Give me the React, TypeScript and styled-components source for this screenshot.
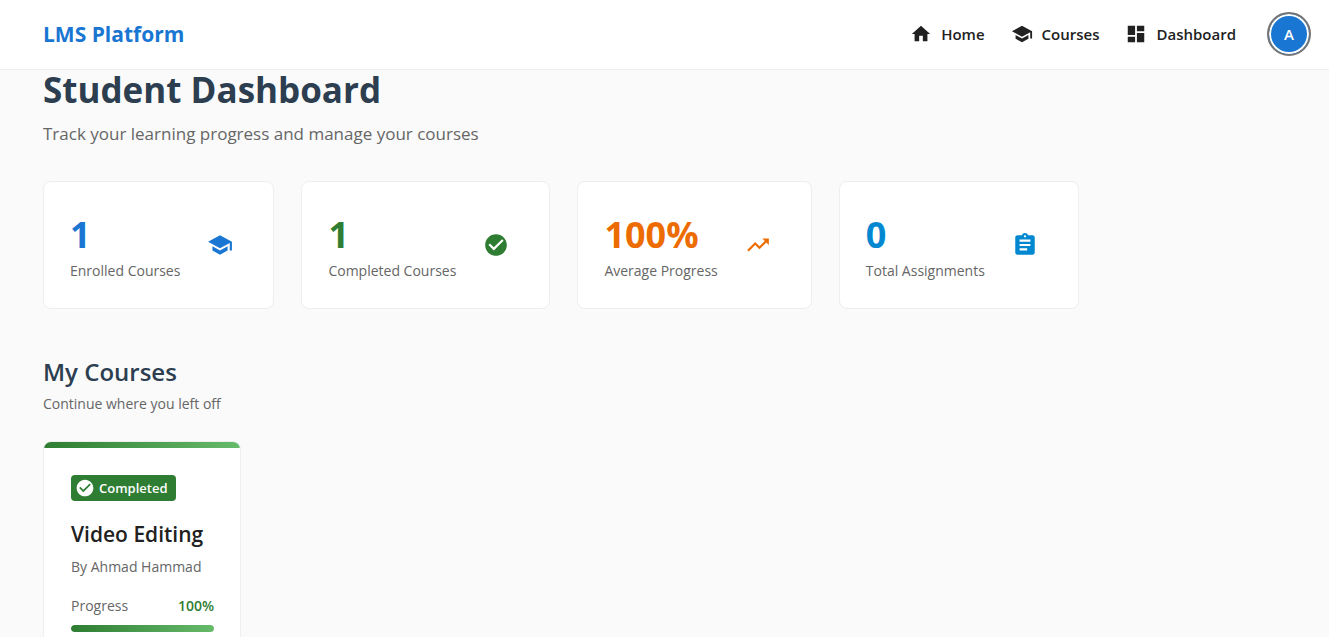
import React from "react";
import styled, { createGlobalStyle } from "styled-components";
import type { IconType } from "react-icons";
import {
  MdAssignment,
  MdCheckCircle,
  MdDashboard,
  MdHome,
  MdSchool,
  MdTrendingUp,
} from "react-icons/md";

const GlobalStyle = createGlobalStyle`
  *, *::before, *::after { box-sizing: border-box; }
  html { scrollbar-width: none; }
  body {
    margin: 0;
    background: #fafafa;
    color: #212121;
    font-family: "Segoe UI", "Open Sans", "Noto Sans", sans-serif;
  }
  h1, h2, h3, p { margin: 0; }
`;

const Header = styled.header`
  display: flex;
  align-items: center;
  justify-content: space-between;
  padding: 12px 18px 13px 43px;
  background: #fff;
  border-bottom: 1px solid #eee;
`;

const Brand = styled.a`
  color: #1976d2;
  font-size: 21px;
  line-height: 32px;
  font-weight: 700;
  text-decoration: none;
`;

const Nav = styled.nav`
  display: flex;
  align-items: center;
  gap: 26px;
`;

const NavLink = styled.a`
  display: flex;
  align-items: center;
  gap: 9px;
  color: #212121;
  font-size: 15px;
  line-height: 24px;
  font-weight: 600;
  text-decoration: none;

  svg { width: 22px; height: 22px; }
`;

const Avatar = styled.button`
  width: 44px;
  height: 44px;
  margin-left: 5px;
  padding: 0;
  border: 2px solid #757575;
  border-radius: 50%;
  background: #1976d2;
  box-shadow: inset 0 0 0 2px #fff;
  color: #fff;
  font: inherit;
  font-size: 15px;
  font-weight: 600;
`;

const Main = styled.main`
  padding: 0 43px 32px;
`;

const Title = styled.h1`
  color: #2c3e50;
  font-size: 35px;
  line-height: 40px;
  font-weight: 700;
`;

const Subtitle = styled.p`
  margin-top: 10px;
  color: #666;
  font-size: 17px;
  line-height: 28px;
  font-weight: 400;
`;

const Stats = styled.section`
  display: flex;
  flex-wrap: wrap;
  gap: 27px;
  margin-top: 33px;
`;

const StatCard = styled.article`
  display: flex;
  align-items: center;
  gap: 27px;
  padding: 29px 40px 25px 26px;
  border: 1px solid #eee;
  border-radius: 8px;
  background: #fff;
`;

const StatValue = styled.p<{ $color: string }>`
  color: ${({ $color }) => $color};
  font-size: 36px;
  line-height: 48px;
  font-weight: 700;
`;

const StatIcon = styled.span<{ $color: string }>`
  display: flex;
  margin-bottom: 4px;
  color: ${({ $color }) => $color};

  svg { width: 26px; height: 26px; }
`;

const Caption = styled.p`
  color: #666;
  font-size: 14px;
  line-height: 24px;
  font-weight: 400;
`;

const Section = styled.section`
  margin-top: 43px;
`;

const SectionTitle = styled.h2`
  color: #2c3e50;
  font-size: 24px;
  line-height: 40px;
  font-weight: 600;
`;

const CourseList = styled.div`
  display: flex;
  flex-wrap: wrap;
  gap: 27px;
  margin-top: 25px;
`;

const CourseCard = styled.article`
  min-width: 198px;
  overflow: hidden;
  border: 1px solid #eee;
  border-radius: 8px;
  background: #fff;
`;

const CardStripe = styled.div`
  height: 6px;
  background: linear-gradient(90deg, #2e7d32, #66bb6a);
`;

const CourseBody = styled.div`
  padding: 27px 26px 27px 27px;
`;

const Badge = styled.span`
  display: inline-flex;
  align-items: center;
  gap: 4px;
  height: 26px;
  padding: 0 8px 0 4px;
  border-radius: 4px;
  background: #2e7d32;
  color: #fff;
  font-size: 13px;
  line-height: 26px;
  font-weight: 600;
  vertical-align: top;

  svg { width: 20px; height: 20px; }
`;

const CourseTitle = styled.h3`
  margin-top: 17px;
  font-size: 21px;
  line-height: 32px;
  font-weight: 600;
`;

const Author = styled(Caption)`
  margin-top: 5px;
`;

const ProgressRow = styled.div`
  display: flex;
  justify-content: space-between;
  margin-top: 15px;
`;

const ProgressValue = styled.span`
  color: #2e7d32;
  font-size: 14px;
  line-height: 24px;
  font-weight: 600;
`;

const Track = styled.div`
  height: 7px;
  margin-top: 7px;
  overflow: hidden;
  border-radius: 4px;
  background: #e0e0e0;
`;

const Fill = styled.div`
  height: 100%;
  border-radius: 4px;
  background: linear-gradient(90deg, #2e7d32, #66bb6a);
`;

const links: { label: string; icon: IconType }[] = [
  { label: "Home", icon: MdHome },
  { label: "Courses", icon: MdSchool },
  { label: "Dashboard", icon: MdDashboard },
];

const stats: { value: string; label: string; color: string; icon: IconType }[] = [
  { value: "1", label: "Enrolled Courses", color: "#1976d2", icon: MdSchool },
  { value: "1", label: "Completed Courses", color: "#2e7d32", icon: MdCheckCircle },
  { value: "100%", label: "Average Progress", color: "#ed6c02", icon: MdTrendingUp },
  { value: "0", label: "Total Assignments", color: "#0288d1", icon: MdAssignment },
];

const courses = [{ title: "Video Editing", author: "Ahmad Hammad", progress: 100 }];

export default function App() {
  return (
    <>
      <GlobalStyle />
      <Header>
        <Brand href="#">LMS Platform</Brand>
        <Nav>
          {links.map(({ label, icon: Icon }) => (
            <NavLink href="#" key={label}>
              <Icon aria-hidden />
              {label}
            </NavLink>
          ))}
          <Avatar type="button">A</Avatar>
        </Nav>
      </Header>
      <Main>
        <Title>Student Dashboard</Title>
        <Subtitle>Track your learning progress and manage your courses</Subtitle>
        <Stats>
          {stats.map(({ value, label, color, icon: Icon }) => (
            <StatCard key={label}>
              <div>
                <StatValue $color={color}>{value}</StatValue>
                <Caption>{label}</Caption>
              </div>
              <StatIcon $color={color}>
                <Icon aria-hidden />
              </StatIcon>
            </StatCard>
          ))}
        </Stats>
        <Section>
          <SectionTitle>My Courses</SectionTitle>
          <Caption>Continue where you left off</Caption>
          <CourseList>
            {courses.map(({ title, author, progress }) => (
              <CourseCard key={title}>
                <CardStripe />
                <CourseBody>
                  <Badge>
                    <MdCheckCircle aria-hidden />
                    Completed
                  </Badge>
                  <CourseTitle>{title}</CourseTitle>
                  <Author>By {author}</Author>
                  <ProgressRow>
                    <Caption>Progress</Caption>
                    <ProgressValue>{progress}%</ProgressValue>
                  </ProgressRow>
                  <Track>
                    <Fill style={{ width: `${progress}%` }} />
                  </Track>
                </CourseBody>
              </CourseCard>
            ))}
          </CourseList>
        </Section>
      </Main>
    </>
  );
}
